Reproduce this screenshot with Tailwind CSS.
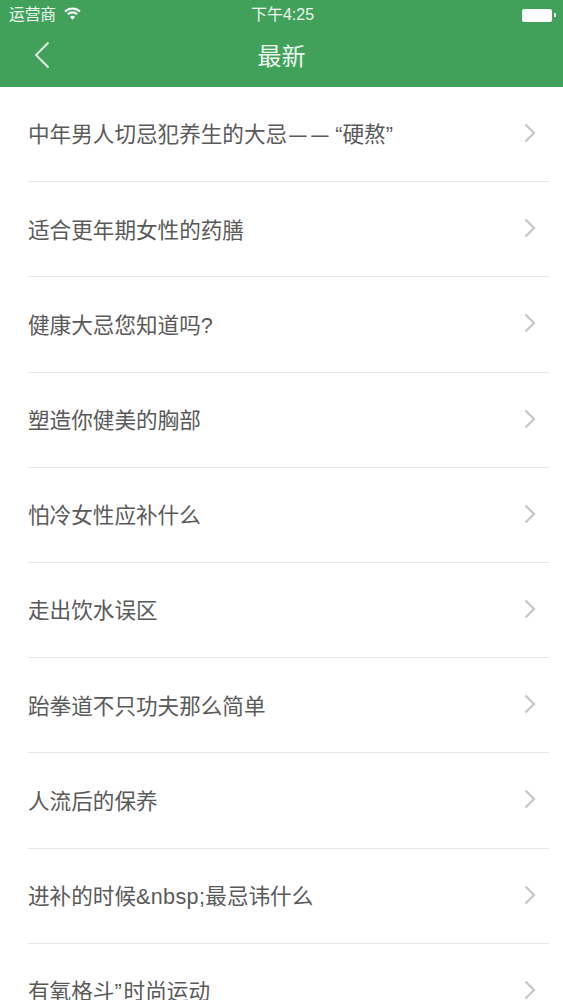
<!DOCTYPE html>
<html lang="zh">
<head>
<meta charset="utf-8">
<script src="https://cdn.jsdelivr.net/npm/@tailwindcss/browser@4"></script>
</head>
<body class="bg-white overflow-hidden">
<div class="w-[563px] h-[1000px] overflow-hidden font-['Liberation_Sans','Noto_Sans_CJK_SC',sans-serif]">
  <header class="h-[87px] bg-[#41a15a] text-white flex flex-col">
    <div class="h-[30px] grid grid-cols-3 items-center pl-[9px] pr-[7px] text-[15.7px] text-white/90">
      <div class="flex items-center gap-[8px]">
        <span>运营商</span>
        <svg width="17" height="13" viewBox="0 0 16 12" class="-mt-[3px]" fill="none" stroke="white" stroke-width="2"><path d="M1 4.2a10 10 0 0 1 14 0"/><path d="M3.6 6.8a6.2 6.2 0 0 1 8.8 0"/><path d="M8 11.8 5.7 9.2a3.2 3.2 0 0 1 4.6 0z" fill="white" stroke="none"/></svg>
      </div>
      <div class="text-center text-[16px]">下午4:25</div>
      <div class="flex justify-end items-center">
        <div class="w-[30px] h-[13px] bg-white rounded-[2px]"></div>
        <div class="w-[2px] h-[4px] bg-white/80 ml-[2px]"></div>
      </div>
    </div>
    <div class="relative flex-1 flex items-center justify-center pb-[4px]">
      <svg width="16" height="28" viewBox="0 0 16 28" fill="none" stroke="#e6f3e9" stroke-width="1.8" class="absolute left-[34px] top-[11px]"><path d="M14.5 1.5 2 14l12.5 12.5"/></svg>
      <h1 class="text-[24px] font-normal text-white/90">最新</h1>
    </div>
  </header>
  <ul class="text-[21.6px] text-[#5a5a5a] pl-[28px] pr-[14px]">
    <li class="h-[95.2px] flex items-center justify-between border-b border-[#e8e8e8]"><span class="pt-[3px]">中年男人切忌犯养生的大忌<span class="inline-block scale-x-80 text-center">—</span><span class="inline-block scale-x-80 text-center">—</span><span class="ml-[5px]">“硬熬”</span></span><svg width="13" height="20" viewBox="0 0 13 20" fill="none" stroke="#c8c8c8" stroke-width="2.4" class="mr-[13px] mb-[2px]"><path d="M2.5 1.5 11 10l-8.500 8.500"/></svg></li>
    <li class="h-[95.2px] flex items-center justify-between border-b border-[#e8e8e8]"><span class="pt-[3px]">适合更年期女性的药膳</span><svg width="13" height="20" viewBox="0 0 13 20" fill="none" stroke="#c8c8c8" stroke-width="2.4" class="mr-[13px] mb-[2px]"><path d="M2.5 1.5 11 10l-8.500 8.500"/></svg></li>
    <li class="h-[95.2px] flex items-center justify-between border-b border-[#e8e8e8]"><span class="pt-[3px]">健康大忌您知道吗?</span><svg width="13" height="20" viewBox="0 0 13 20" fill="none" stroke="#c8c8c8" stroke-width="2.4" class="mr-[13px] mb-[2px]"><path d="M2.5 1.5 11 10l-8.500 8.500"/></svg></li>
    <li class="h-[95.2px] flex items-center justify-between border-b border-[#e8e8e8]"><span class="pt-[3px]">塑造你健美的胸部</span><svg width="13" height="20" viewBox="0 0 13 20" fill="none" stroke="#c8c8c8" stroke-width="2.4" class="mr-[13px] mb-[2px]"><path d="M2.5 1.5 11 10l-8.500 8.500"/></svg></li>
    <li class="h-[95.2px] flex items-center justify-between border-b border-[#e8e8e8]"><span class="pt-[3px]">怕冷女性应补什么</span><svg width="13" height="20" viewBox="0 0 13 20" fill="none" stroke="#c8c8c8" stroke-width="2.4" class="mr-[13px] mb-[2px]"><path d="M2.5 1.5 11 10l-8.500 8.500"/></svg></li>
    <li class="h-[95.2px] flex items-center justify-between border-b border-[#e8e8e8]"><span class="pt-[3px]">走出饮水误区</span><svg width="13" height="20" viewBox="0 0 13 20" fill="none" stroke="#c8c8c8" stroke-width="2.4" class="mr-[13px] mb-[2px]"><path d="M2.5 1.5 11 10l-8.500 8.500"/></svg></li>
    <li class="h-[95.2px] flex items-center justify-between border-b border-[#e8e8e8]"><span class="pt-[3px]">跆拳道不只功夫那么简单</span><svg width="13" height="20" viewBox="0 0 13 20" fill="none" stroke="#c8c8c8" stroke-width="2.4" class="mr-[13px] mb-[2px]"><path d="M2.5 1.5 11 10l-8.500 8.500"/></svg></li>
    <li class="h-[95.2px] flex items-center justify-between border-b border-[#e8e8e8]"><span class="pt-[3px]">人流后的保养</span><svg width="13" height="20" viewBox="0 0 13 20" fill="none" stroke="#c8c8c8" stroke-width="2.4" class="mr-[13px] mb-[2px]"><path d="M2.5 1.5 11 10l-8.500 8.500"/></svg></li>
    <li class="h-[95.2px] flex items-center justify-between border-b border-[#e8e8e8]"><span class="pt-[3px]">进补的时候<span class="tracking-[0.35px]">&amp;nbsp;</span>最忌讳什么</span><svg width="13" height="20" viewBox="0 0 13 20" fill="none" stroke="#c8c8c8" stroke-width="2.4" class="mr-[13px] mb-[2px]"><path d="M2.5 1.5 11 10l-8.500 8.500"/></svg></li>
    <li class="h-[95.2px] flex items-center justify-between border-b border-[#e8e8e8]"><span class="pt-[3px]">有氧格斗<span class="tracking-[2px]">”</span>时尚运动</span><svg width="13" height="20" viewBox="0 0 13 20" fill="none" stroke="#c8c8c8" stroke-width="2.4" class="mr-[13px] mb-[2px]"><path d="M2.5 1.5 11 10l-8.500 8.500"/></svg></li>
  </ul>
</div>
</body>
</html>
